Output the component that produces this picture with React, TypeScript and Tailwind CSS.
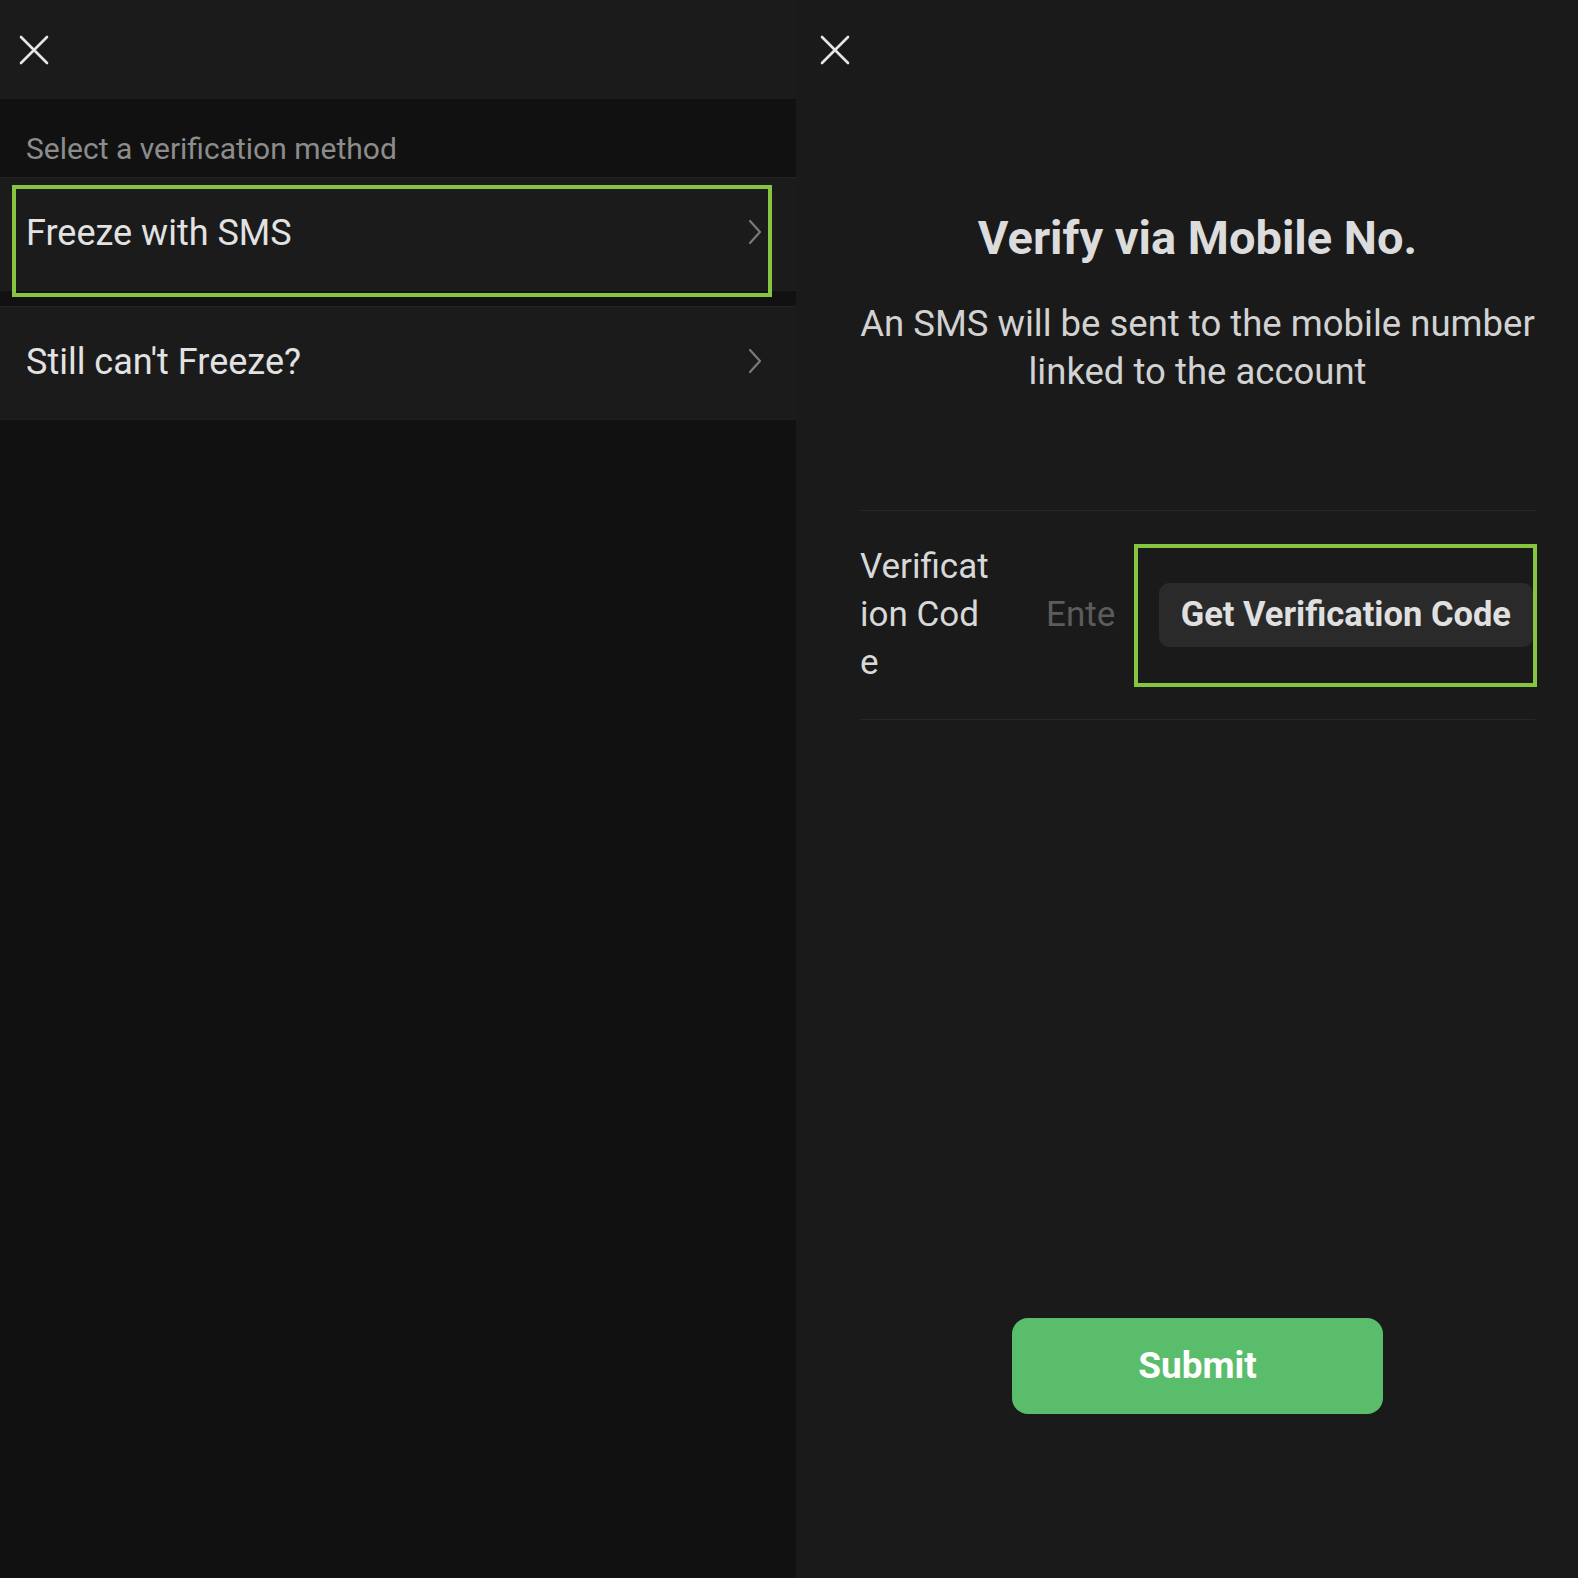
const CloseIcon = () => (
    <svg width="30" height="30" viewBox="0 0 30 30" fill="none" stroke="#e6e6e6" strokeWidth="2.6" strokeLinecap="round">
        <path d="M2 2 L28 28 M28 2 L2 28" />
    </svg>
);

const Chevron = () => (
    <svg width="16" height="28" viewBox="0 0 16 28" fill="none" stroke="#7a7a7a" strokeWidth="2.2" strokeLinecap="round" strokeLinejoin="round">
        <path d="M3 3 L13 14 L3 25" />
    </svg>
);

const MethodRow = ({ label, highlighted }: { label: string; highlighted?: boolean }) => (
    <div className="relative flex h-[112px] items-start bg-[#1b1b1b] pl-[26px] pr-[33px] pt-[31px]">
        <span className="flex-1 text-[36px] leading-[48px] text-[#e2e2e2]">{label}</span>
        <div className="mt-[9px]">
            <Chevron />
        </div>
        {highlighted && (
            <div className="absolute left-[12px] top-[7px] h-[112px] w-[760px] border-4 border-[#86c540]" />
        )}
    </div>
);

export default function App() {
    return (
        <div
            className="flex h-[1578px] w-[1578px] overflow-hidden bg-[#111111]"
            style={{ fontFamily: 'Roboto, "Liberation Sans", sans-serif' }}
        >
            {/* Left: method list */}
            <div className="flex w-[796px] flex-col bg-[#111111]">
                <div className="flex h-[99px] items-center bg-[#1b1b1b] pl-[19px]">
                    <CloseIcon />
                </div>
                <div className="flex h-[78px] items-end pb-[10px] pl-[26px]">
                    <span className="text-[30px] leading-[36px] text-[#8c8c8c]">Select a verification method</span>
                </div>
                <div className="border-t border-[#222222]">
                    <MethodRow label="Freeze with SMS" highlighted />
                </div>
                <div className="h-[16px] border-t border-[#1e1e1e]" />
                <div className="border-t border-[#232323]">
                    <MethodRow label="Still can't Freeze?" />
                </div>
                <div className="border-t border-[#1f1f1f]" />
            </div>

            {/* Right: verify via mobile */}
            <div className="flex flex-1 flex-col bg-[#1a1a1a]">
                <div className="flex h-[99px] items-center pl-[24px]">
                    <CloseIcon />
                </div>
                <div className="flex flex-col pl-[64px] pr-[43px]">
                    <h1 className="mt-[110px] text-center text-[47px] font-bold leading-[58px] text-[#dcdcdc]">
                        Verify via Mobile No.
                    </h1>
                    <p className="mt-[33px] text-center text-[36.5px] leading-[48px] text-[#d2d2d2]">
                        An SMS will be sent to the mobile number linked to the account
                    </p>
                    <div className="mt-[114px] flex items-center border-y border-[#282828] py-[32px]">
                        <span className="w-[130px] break-all text-[35px] leading-[48px] text-[#d8d8d8]">
                            Verification Code
                        </span>
                        <input
                            className="ml-[56px] w-[70px] bg-transparent text-[35px] text-[#d8d8d8] outline-none placeholder:text-[#5c5c5c]"
                            placeholder="Enter verification code"
                        />
                        <div className="-mr-[2px] ml-[18px] flex h-[143px] flex-1 items-center justify-end border-4 border-[#86c540]">
                            <button className="h-[64px] whitespace-nowrap rounded-[10px] bg-[#2a2a2a] px-[22px] text-[34.5px] font-bold text-[#e0e0e0]">
                                Get Verification Code
                            </button>
                        </div>
                    </div>
                    <div className="mt-[598px] flex justify-center">
                        <button className="h-[96px] w-[371px] rounded-[16px] bg-[#5abd6b] text-[37px] font-bold text-white">
                            Submit
                        </button>
                    </div>
                </div>
            </div>
        </div>
    );
}
